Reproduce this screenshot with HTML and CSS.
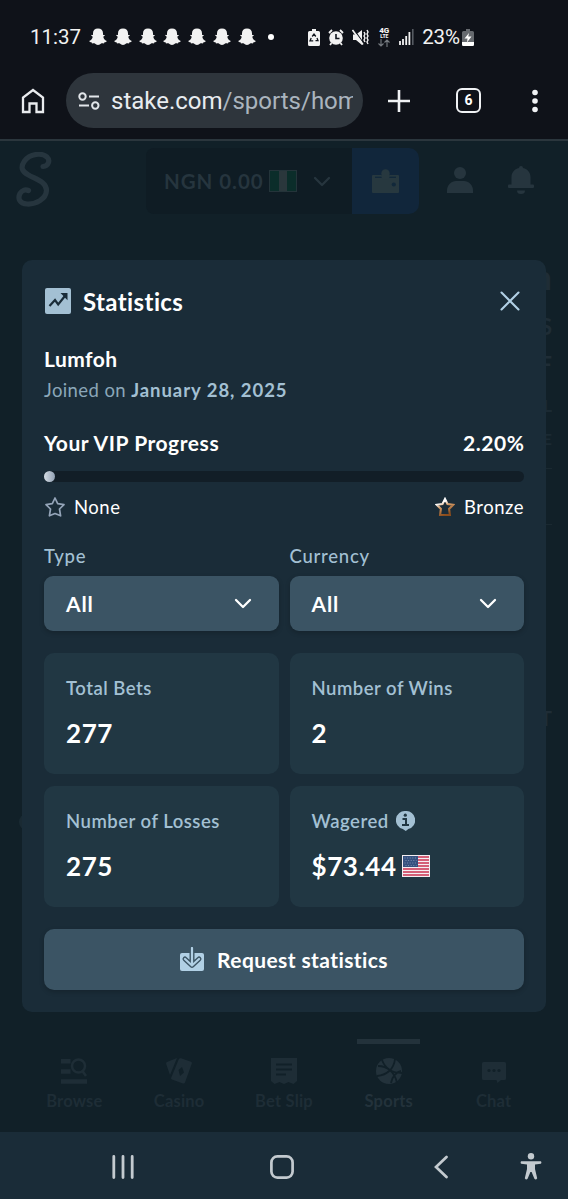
FILE: index.html
```html
<!DOCTYPE html>
<html lang="en">
<head>
  <meta charset="UTF-8" />
  <meta name="viewport" content="width=device-width, initial-scale=1" />
  <title>Stake - Statistics</title>

  <link rel="stylesheet" href="styles.css">
</head>
<body>

  <!-- Shared icon shapes -->
  <svg class="defs" width="0" height="0">
    <defs>
      <symbol id="ghost" viewBox="0 0 18 18">
        <path d="M9 .5c3.200 0 5 2 5 4.700v1.600c.8.300 1.600 0 1.800.4.200.6-1.500 1-1.500 1.600.2 1.800 1.400 3.500 3.500 4.200-.1.900-1.500 1.100-2.300 1.300-.3.400-.1 1-.8 1.100-.8 0-1.700-.3-2.600.2-.9.600-1.700 1.500-3.100 1.500s-2.200-.9-3.100-1.500c-.9-.5-1.800-.2-2.600-.2-.7-.1-.5-.7-.8-1.100C1.700 14.100.3 13.900.2 13c2.100-.7 3.300-2.400 3.500-4.200 0-.6-1.700-1-1.500-1.600.2-.4 1-.1 1.800-.4V5.200C4 2.500 5.800.5 9 .5z" fill="#f2f2f2"/>
      </symbol>
      <symbol id="chevron" viewBox="0 0 18 11">
        <path d="M2 2l7 7 7-7" fill="none" stroke="currentColor" stroke-width="2.300" stroke-linecap="round" stroke-linejoin="round"/>
      </symbol>
      <linearGradient id="bronze" x1="0.1" y1="0" x2="0.500" y2="1">
        <stop offset="0.250" stop-color="#fff"/>
        <stop offset="0.500" stop-color="#d39a66"/>
        <stop offset="1" stop-color="#8a4c1c"/>
      </linearGradient>
    </defs>
  </svg>

  <!-- Phone status bar -->
  <div class="status-bar">
    <span class="time">11:37</span>
    <div class="ghosts">
      <svg><use href="#ghost"/></svg>
      <svg><use href="#ghost"/></svg>
      <svg><use href="#ghost"/></svg>
      <svg><use href="#ghost"/></svg>
      <svg><use href="#ghost"/></svg>
      <svg><use href="#ghost"/></svg>
      <svg><use href="#ghost"/></svg>
    </div>
    <span class="dot"></span>
    <div class="status-icons">
      <svg width="12" height="17" viewBox="0 0 12 17">
        <path d="M4 0h4v2h2.500Q12 2 12 3.500v12Q12 17 10.500 17h-9Q0 17 0 15.500v-12Q0 2 1.500 2H4z" fill="#f2f2f2"/>
        <path d="M4.200 7.500L6 5l1.800 2.500M9 9l1 2.700H7.500M5.200 11.900H2L3.200 9" fill="none" stroke="#10151d" stroke-width="1.300"/>
      </svg>
      <svg width="16" height="17" viewBox="0 0 16 17">
        <circle cx="8" cy="9" r="6.800" fill="#f2f2f2"/>
        <path d="M1 4l3-3M15 4l-3-3M3.500 14L2 16M12.500 14l1.500 2" stroke="#f2f2f2" stroke-width="1.800"/>
        <path d="M8 5v4.500h3.500" fill="none" stroke="#10151d" stroke-width="1.600"/>
      </svg>
      <svg width="17" height="17" viewBox="0 0 17 17">
        <path d="M1 5.500h3L10 1v15l-6-5H1z" fill="#f2f2f2"/>
        <path d="M1.500 0l10 14" stroke="#10151d" stroke-width="1.200"/>
        <path d="M.5 1l10.500 14.500" stroke="#f2f2f2" stroke-width="1.600"/>
        <path d="M12 3l1 2-1 2 1 2-1 2 1 2M15 1l1 2-1 2 1 2-1 2 1 2-1 2 1 2" fill="none" stroke="#f2f2f2" stroke-width="1.400"/>
      </svg>
      <div class="network">
        <span>4G</span>
        <span class="lte">LTE</span>
        <svg width="12" height="8" viewBox="0 0 12 8"><path d="M3 0v7M.5 4.500L3 7l2.500-2.500M9 8V1M6.500 3.500L9 1l2.500 2.500" fill="none" stroke="#777c82" stroke-width="1.100"/></svg>
      </div>
      <svg width="15" height="16" viewBox="0 0 15 16">
        <path d="M1 12v4M4 10v6M7.200 7v9M10.400 3v13" stroke="#f2f2f2" stroke-width="1.800"/>
        <path d="M13.800 0v16" stroke="#555a61" stroke-width="1.600"/>
      </svg>
    </div>
    <span class="percent">23%</span>
    <svg class="battery" width="12" height="17" viewBox="0 0 12 17">
      <path d="M4 0h4v2h2.500Q12 2 12 3.500v12Q12 17 10.500 17h-9Q0 17 0 15.500v-12Q0 2 1.500 2H4z" fill="#666a6f"/>
      <path d="M0 13h12v2.500Q12 17 10.500 17h-9Q0 17 0 15.500zM7 4L2.500 9.500h3L5 13.500l4.500-6H6.300z" fill="#fff"/>
    </svg>
  </div>

  <!-- Browser toolbar -->
  <div class="browser-bar">
    <svg class="home" width="24" height="26" viewBox="0 0 24 26">
      <path d="M2 24V9.500L12 2l10 7.500V24h-6.500v-8.500h-7V24z" fill="none" stroke="#e9ebee" stroke-width="2.300"/>
    </svg>
    <div class="address">
      <svg width="22" height="18" viewBox="0 0 22 18" fill="none" stroke="#e2e6ea" stroke-width="2">
        <circle cx="4.500" cy="4.500" r="3.200"/><circle cx="17.300" cy="13.500" r="3.200"/>
        <path d="M11 4.500h10M1 13.500h10"/>
      </svg>
      <span class="url">stake.com<span class="path">/sports/hom</span></span>
    </div>
    <svg class="plus" width="22" height="22" viewBox="0 0 22 22"><path d="M11 0v22M0 11h22" stroke="#f0f2f4" stroke-width="2.600"/></svg>
    <span class="tab-count">6</span>
    <svg class="dots" width="6" height="24" viewBox="0 0 6 24" fill="#f0f2f4"><circle cx="3" cy="3.500" r="2.800"/><circle cx="3" cy="12" r="2.800"/><circle cx="3" cy="20.500" r="2.800"/></svg>
  </div>

  <!-- Site, dimmed behind the modal -->
  <div class="site">
    <header class="site-header">
      <svg class="logo" width="38" height="58" viewBox="0 0 38 58">
        <path d="M29 14.500C34.500 14 36.500 8.500 33 5 28 .5 16 1.500 10.500 9 6 15.500 8 19.500 14.500 23c8 4.500 18 7 18 15.500C32 47 22 52.500 13 52 5.500 51.500 3.500 46.500 6 41.500c1.700-3 5-4.500 8.500-3" fill="none" stroke="#26353e" stroke-width="5.200" stroke-linecap="round"/>
      </svg>
      <div class="balance">
        <span>NGN 0.00</span>
        <span class="flag-ng"></span>
        <svg width="18" height="11"><use href="#chevron"/></svg>
      </div>
      <div class="wallet">
        <svg width="27" height="24" viewBox="0 0 27 24">
          <path d="M1 6h8.500a4.200 4.200 0 0 0 8 0H26q1 0 1 1v16q0 1-1 1H1q-1 0-1-1V7q0-1 1-1z" fill="#27383f"/>
          <circle cx="13.500" cy="4.500" r="4.200" fill="#27383f"/>
          <path d="M3 8.300h21" stroke="#11283a" stroke-width="1.300"/>
          <path d="M9.500 6h8v2a4 3 0 0 1-8 0z" fill="#27383f"/>
          <circle cx="21.800" cy="15.500" r="2.100" fill="#11283a"/>
        </svg>
      </div>
      <svg class="user" width="26" height="26" viewBox="0 0 26 26" fill="#26353e"><circle cx="13" cy="6" r="6"/><path d="M0 26v-2.500C0 18 4.500 14 9 14h8c4.500 0 9 4 9 9.500V26z"/></svg>
      <svg class="bell" width="26" height="28" viewBox="0 0 26 28" fill="#26353e"><path d="M11 2a2 2 0 0 1 4 0c5 1 7.500 5 7.500 9v7.500H25q1 0 1 1v1.500q0 1-1 1H1q-1 0-1-1v-1.500q0-1 1-1h2.500V11c0-4 2.500-8 7.500-9zM9 24.500h8a4 3.500 0 0 1-8 0z"/></svg>
    </header>

    <!-- Page content peeking out from under the modal -->
    <div class="behind">
      <span class="peek peek-1">n</span>
      <span class="peek peek-2">S</span>
      <span class="peek peek-3">F</span>
      <span class="peek peek-4">L</span>
      <span class="peek peek-5">E</span>
      <span class="peek peek-6">T</span>
      <span class="peek-line line-1"></span>
      <span class="peek-line line-2"></span>
      <span class="peek-round"></span>
    </div>

    <section class="modal">
      <div class="modal-head">
        <svg width="26" height="26" viewBox="0 0 26 26">
          <rect width="26" height="26" rx="2" fill="#a3c0d3"/>
          <path d="M4.500 18l5.500-6 3.200 4.500 7.500-9.500" fill="none" stroke="#1a2c38" stroke-width="2.200"/>
          <path d="M15.500 5h7v7.200z" fill="#1a2c38"/>
        </svg>
        <h1>Statistics</h1>
        <svg class="close" width="20" height="20" viewBox="0 0 20 20"><path d="M1.500 1.500l17 17M18.500 1.500l-17 17" stroke="#b1d0e5" stroke-width="2.100" stroke-linecap="round"/></svg>
      </div>

      <div class="user-name">Lumfoh</div>
      <div class="joined">Joined on <b>January 28, 2025</b></div>

      <div class="vip-row">
        <span>Your VIP Progress</span>
        <span class="vip-percent">2.20%</span>
      </div>
      <div class="progress"><div class="progress-fill" style="width: 2.2%"></div></div>
      <div class="levels">
        <div class="level">
          <svg width="20" height="20" viewBox="0 0 20 20"><path d="M10 1l2.700 5.700 6.300.9-4.500 4.400 1.100 6.800L10 16.500l-5.600 2.300L5.500 12 1 7.600l6.300-.9z" fill="none" stroke="#94a4b8" stroke-width="1.700" stroke-linejoin="round"/></svg>
          <span>None</span>
        </div>
        <div class="level">
          <svg width="20" height="20" viewBox="0 0 20 20"><path d="M10 2l2.500 5 5.800.8-4.200 4.200.8 6H5.100l.8-6-4.200-4.200L7.500 7z" fill="none" stroke="url(#bronze)" stroke-width="2.100"/></svg>
          <span>Bronze</span>
        </div>
      </div>

      <div class="filters">
        <div class="filter">
          <label>Type</label>
          <div class="select"><span>All</span><svg width="18" height="11"><use href="#chevron"/></svg></div>
        </div>
        <div class="filter">
          <label>Currency</label>
          <div class="select"><span>All</span><svg width="18" height="11"><use href="#chevron"/></svg></div>
        </div>
      </div>

      <div class="cards">
        <div class="card">
          <h3>Total Bets</h3>
          <p>277</p>
        </div>
        <div class="card">
          <h3>Number of Wins</h3>
          <p>2</p>
        </div>
        <div class="card">
          <h3>Number of Losses</h3>
          <p>275</p>
        </div>
        <div class="card">
          <h3>Wagered
            <svg width="19" height="20" viewBox="0 0 19 20">
              <path d="M9.500 0a9.200 9.200 0 0 1 2.800 18.100L9.800 20l-3-1.900A9.200 9.200 0 0 1 9.500 0z" fill="#a3c0d3"/>
              <circle cx="9.300" cy="4.200" r="1.600" fill="#213743"/>
              <path d="M6.500 8H10v5.500M6 14h7" fill="none" stroke="#213743" stroke-width="2"/>
            </svg>
          </h3>
          <p>$73.44
            <svg width="28" height="22" viewBox="0 0 28 22">
              <rect width="28" height="22" fill="#f5eef2"/>
              <path d="M1 2h26M1 5h26M1 8h26M1 11h26M1 14h26M1 17h26M1 20h26" stroke="#c9314f" stroke-width="1.500"/>
              <rect x="1" y="1" width="15" height="11" fill="#36517f"/>
              <path d="M2.500 3h13M3.500 5.500h11M2.500 8h13M3.500 10.500h11" stroke="#8b9cba" stroke-width=".8" stroke-dasharray="1 1.600"/>
            </svg>
          </p>
        </div>
      </div>

      <div class="request">
        <svg width="24" height="24" viewBox="0 0 24 24">
          <rect x="0" y="6" width="24" height="18" rx="2" fill="#b1d0e5"/>
          <path d="M12 5v13M5 12l7 6.500 7-6.500" fill="none" stroke="#3b5464" stroke-width="5" stroke-linecap="round" stroke-linejoin="round"/>
          <path d="M12 1v17M5 12l7 6.500 7-6.500" fill="none" stroke="#b1d0e5" stroke-width="2.200" stroke-linecap="round" stroke-linejoin="round"/>
        </svg>
        <span>Request statistics</span>
      </div>
    </section>

    <!-- Bottom tabs -->
    <nav class="tabs">
      <div class="tab">
        <svg width="26" height="26" viewBox="0 0 26 26" fill="none" stroke="#1e2d36"><path d="M0 3.200h9.500M0 13.500h9.500M0 23.500h26" stroke-width="4.400"/><circle cx="17.500" cy="8" r="6.500" stroke-width="2.500"/><path d="M21.500 13l3.500 5" stroke-width="2.600"/></svg>
        <span>Browse</span>
      </div>
      <div class="tab">
        <svg width="26" height="26" viewBox="0 0 26 26" fill="#1e2d36"><path d="M1 4l10-4-7 17L.2 6Q-.2 4.500 1 4zM13 .8Q13.700-.2 15 .3l10 3.500q1.200.5.8 1.800L19 24.500q-.6 1.400-2 1L6 21.500q-1.300-.5-.8-1.800zM16 9l-3.500 3 1.500 6 4-3.500z" fill-rule="evenodd"/></svg>
        <span>Casino</span>
      </div>
      <div class="tab">
        <svg width="26" height="26" viewBox="0 0 26 26"><path d="M0 0h26v23l-3.500 3-5-2-4.500 2-4.500-2-5 2L0 23z" fill="#1e2d36"/><path d="M5 6.500h16M5 11.500h16M5 16.500h10" stroke="#112028" stroke-width="2"/></svg>
        <span>Bet Slip</span>
      </div>
      <div class="tab active">
        <svg width="26" height="26" viewBox="0 0 26 26"><circle cx="13" cy="13" r="13" fill="#23323b"/><path d="M2 8c9 0 17 6 19 17M19 1c-1 9-7 16-18 17M6 2c3 8 10 13 20 13M25 13c-5 1-9 6-10 12" fill="none" stroke="#112028" stroke-width="1.800"/></svg>
        <span>Sports</span>
      </div>
      <div class="tab">
        <svg width="24" height="26" viewBox="0 0 24 26"><path d="M1.500 4h21q1.500 0 1.500 1.500v15q0 1.500-1.500 1.500H19l-3.500 3-1-3h-13Q0 22 0 20.500v-15Q0 4 1.500 4z" fill="#1e2d36"/><circle cx="7" cy="12.500" r="1.600" fill="#112028"/><circle cx="12" cy="12.500" r="1.600" fill="#112028"/><circle cx="17" cy="12.500" r="1.600" fill="#112028"/></svg>
        <span>Chat</span>
      </div>
    </nav>
  </div>

  <!-- Phone navigation bar -->
  <div class="phone-nav">
    <svg class="recents" width="22" height="24" viewBox="0 0 22 24"><path d="M1.800 1.500v21M11 1.500v21M20.200 1.500v21" stroke="#c3cacf" stroke-width="2.800" stroke-linecap="round"/></svg>
    <svg class="home-key" width="24" height="24" viewBox="0 0 24 24"><rect x="1.400" y="1.400" width="21.200" height="21.200" rx="6" fill="none" stroke="#c3cacf" stroke-width="2.700"/></svg>
    <svg class="back" width="14" height="24" viewBox="0 0 14 24"><path d="M12.500 2L2 12l10.500 10" fill="none" stroke="#c3cacf" stroke-width="2.700" stroke-linecap="round"/></svg>
    <svg class="access" width="22" height="27" viewBox="0 0 22 27"><circle cx="11" cy="3.300" r="3.200" fill="#c3cacf"/><path d="M1.200 8.300h19.600q1.200 1 0 2.500l-5.800.8V16l2.200 9.200q-1.200 2-2.800.6L11.600 19h-1.200l-2.800 6.800q-1.600 1.400-2.800-.6L7 16v-4.400l-5.800-.8q-1.200-1.500 0-2.500z" fill="#c3cacf"/></svg>
  </div>

</body>
</html>
```
FILE: styles.css
```css
/* Reset & General */
* {
  box-sizing: border-box;
}

body {
  margin: 0;
  width: 568px;
  height: 1199px;
  overflow: hidden;
  display: flex;
  flex-direction: column;
  background: #0f1219;
  color: #fff;
  font-family: Lato, 'Open Sans', sans-serif;
}

svg {
  display: block;
  flex-shrink: 0;
}

.defs {
  position: absolute;
}

h1, h3, p {
  margin: 0;
}

/* Status bar */
.status-bar {
  height: 74px;
  padding-left: 30px;
  display: flex;
  align-items: center;
  font-family: Roboto, sans-serif;
  font-size: 20px;
  color: #f2f2f2;
}

.time {
  width: 59px;
  font-size: 20.500px;
}

.ghosts {
  display: flex;
  gap: 6.800px;
}

.ghosts svg {
  width: 18px;
  height: 18px;
}

.dot {
  width: 6px;
  height: 6px;
  margin-left: 12.500px;
  border-radius: 50%;
  background: #fff;
}

.status-icons {
  display: flex;
  align-items: center;
  gap: 8px;
  margin-left: 34px;
}

.network {
  width: 14px;
  display: flex;
  flex-direction: column;
  align-items: center;
  font-size: 8px;
  line-height: 6px;
  font-weight: 900;
}

.network .lte {
  font-size: 5px;
  line-height: 5px;
}

.percent {
  width: 40px;
  margin-left: 8px;
  font-size: 20.500px;
  letter-spacing: -0.200px;
}

/* Browser toolbar */
.browser-bar {
  height: 65px;
  padding: 0 0 12px 21px;
  display: flex;
  align-items: center;
}

.address {
  width: 297px;
  height: 55px;
  margin-left: 21px;
  padding: 0 10px 0 12px;
  border-radius: 28px;
  background: #2e353c;
  display: flex;
  align-items: center;
  gap: 11px;
}

.url {
  overflow: hidden;
  white-space: nowrap;
  font-family: Roboto, sans-serif;
  font-size: 24px;
  line-height: 32px;
  color: #e8ecf0;
}

.path {
  color: #aab4be;
}

.plus {
  margin-left: 25px;
}

.tab-count {
  width: 25px;
  height: 25px;
  margin-left: 46px;
  border: 2.600px solid #f0f2f4;
  border-radius: 6px;
  font: 700 14px/20px Roboto, sans-serif;
  text-align: center;
}

.dots {
  margin-left: 51px;
}

/* Site */
.site {
  position: relative;
  height: 993px;
  border-top: 2px solid #2b363d;
  background: #112028;
  display: flex;
  flex-direction: column;
}

.site-header {
  height: 80px;
  padding-left: 14px;
  display: flex;
  align-items: center;
}

.balance {
  width: 206px;
  height: 66px;
  margin-left: 94px;
  padding-left: 18px;
  border-radius: 8px 0 0 8px;
  background: #0f1c24;
  display: flex;
  align-items: center;
  color: #26353e;
  font-size: 20.500px;
  font-weight: 700;
  letter-spacing: 0.950px;
}

.flag-ng {
  width: 28px;
  height: 22px;
  margin: 0 16px 0 5px;
  border: 1px solid #24343a;
  background: linear-gradient(90deg, #0b2d2a 34%, #2a373c 34%, #2a373c 66%, #0b2d2a 66%);
}

.wallet {
  width: 67px;
  height: 66px;
  border-radius: 0 10px 10px 0;
  background: #11263b;
  display: flex;
  align-items: center;
  justify-content: center;
}

.user {
  margin: -2px 0 0 28px;
}

.bell {
  margin: -2px 0 0 35px;
}

.behind {
  position: absolute;
  inset: 80px 16px 0 0;
  overflow: hidden;
  color: #1f2d36;
  font-weight: 700;
}

.peek {
  position: absolute;
  right: 0;
  font-size: 22px;
  line-height: 24px;
}

.peek-1 {
  top: 44px;
  font-size: 34px;
}

.peek-2 {
  top: 94px;
}

.peek-3 {
  top: 132px;
}

.peek-4 {
  top: 173px;
  font-size: 17px;
  color: #1b2a33;
}

.peek-5 {
  top: 206px;
  font-size: 16px;
  color: #1b2a33;
}

.peek-6 {
  top: 485px;
  font-size: 20px;
}

.peek-line {
  position: absolute;
  right: 0;
  width: 8px;
  height: 1px;
  background: #1a2931;
}

.line-1 {
  top: 247px;
}

.line-2 {
  top: 303px;
}

.peek-round {
  position: absolute;
  left: 19px;
  top: 593px;
  width: 16px;
  height: 16px;
  border-radius: 50%;
  background: #1a2a33;
}

/* Modal */
.modal {
  position: relative;
  height: 752px;
  margin: 39px 22px 0;
  padding: 22px;
  border-radius: 10px;
  background: #1a2c38;
}

.modal-head {
  height: 38px;
  padding-left: 1px;
  display: flex;
  align-items: center;
}

.modal-head h1 {
  margin-left: 12px;
  font-size: 24px;
  font-weight: 700;
  letter-spacing: 0.400px;
}

.close {
  margin: 0 4px 0 auto;
}

.user-name {
  margin-top: 27px;
  font-size: 21px;
  line-height: 24px;
  font-weight: 700;
  letter-spacing: 0.450px;
}

.joined {
  margin-top: 6px;
  font-size: 18.500px;
  line-height: 26px;
  color: #8ba7b9;
  letter-spacing: 0.400px;
}

.joined b {
  color: #a3c0d3;
  letter-spacing: 0.950px;
}

.vip-row {
  margin-top: 28px;
  display: flex;
  justify-content: space-between;
  font-size: 21px;
  line-height: 24px;
  font-weight: 700;
  letter-spacing: 0.550px;
}

.vip-percent {
  margin-right: -0.500px;
}

.progress {
  height: 11px;
  margin-top: 16px;
  border-radius: 6px;
  background: #121e27;
}

.progress-fill {
  height: 11px;
  border-radius: 6px;
  background: linear-gradient(90deg, #d5dde5, #91a0b3);
}

.levels {
  margin-top: 13px;
  display: flex;
  justify-content: space-between;
  font-size: 18.500px;
  line-height: 24px;
  letter-spacing: 0.500px;
}

.level {
  display: flex;
  align-items: center;
  gap: 9px;
  padding-left: 1px;
}

.filters {
  margin-top: 25px;
  display: grid;
  grid-template-columns: 1fr 1fr;
  gap: 11px;
}

.filter label {
  display: block;
  font-size: 18.500px;
  line-height: 24px;
  font-weight: 500;
  color: #a3c0d3;
  letter-spacing: 0.750px;
}

.select {
  height: 55px;
  margin-top: 8px;
  padding: 0 27px 0 22px;
  border-radius: 9px;
  background: #3b5464;
  box-shadow: 0 2px 5px rgba(0,0,0,0.2);
  display: flex;
  align-items: center;
  justify-content: space-between;
  font-size: 21px;
  font-weight: 700;
  letter-spacing: 0.900px;
}

.cards {
  margin-top: 22px;
  display: grid;
  grid-template-columns: 1fr 1fr;
  grid-auto-rows: 121px;
  gap: 11.500px 11px;
}

.card {
  padding: 22px;
  border-radius: 10px;
  background: #213743;
}

.card h3 {
  display: flex;
  align-items: center;
  gap: 7px;
  font-size: 18.500px;
  line-height: 26px;
  font-weight: 600;
  color: #a3c0d3;
  letter-spacing: 0.500px;
}

.card p {
  margin-top: 16px;
  display: flex;
  align-items: center;
  gap: 5px;
  font-size: 26px;
  line-height: 32px;
  font-weight: 700;
  letter-spacing: 0.600px;
}

.request {
  height: 61px;
  margin-top: 22px;
  border-radius: 10px;
  background: #3b5464;
  box-shadow: 0 2px 5px rgba(0,0,0,0.2);
  display: flex;
  align-items: center;
  justify-content: center;
  gap: 13px;
  font-size: 21px;
  font-weight: 700;
  letter-spacing: 0.400px;
}

/* Bottom tabs */
.tabs {
  height: 120px;
  padding: 0 22px;
  display: grid;
  grid-template-columns: repeat(5, 1fr);
}

.tab {
  padding-top: 46px;
  display: flex;
  flex-direction: column;
  align-items: center;
  gap: 7px;
  font-size: 16.500px;
  line-height: 20px;
  font-weight: 700;
  letter-spacing: 0.200px;
  color: #1e2d36;
}

.tab.active {
  color: #23323b;
  background: linear-gradient(#23323b, #23323b) center 27px / 63px 5px no-repeat;
}

/* Phone navigation bar */
.phone-nav {
  height: 67px;
  padding: 2px 0 0 112px;
  background: #1a2c38;
  display: flex;
  align-items: center;
}

.home-key {
  margin-left: 136px;
}

.back {
  margin-left: 140px;
}

.access {
  margin-left: 72px;
}
```
